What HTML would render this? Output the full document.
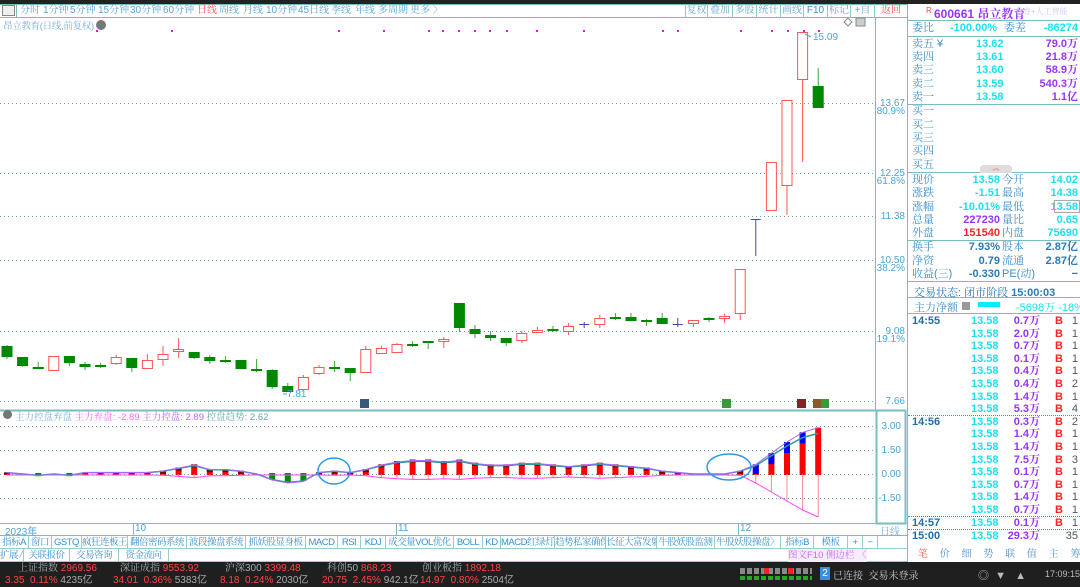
<!DOCTYPE html>
<html><head><meta charset="utf-8">
<style>
*{margin:0;padding:0;box-sizing:border-box}
body{width:1080px;height:587px;overflow:hidden;background:#fff;font-family:"Liberation Sans","Noto Sans CJK SC",sans-serif;font-size:11px;color:#3a9ad6;position:relative}
.a{position:absolute;white-space:nowrap}
.cjk{font-family:"Liberation Sans","Noto Serif CJK SC",serif}
.row{position:absolute;left:912px;width:166px;height:13px;line-height:13px;font-size:11px}
.row span{position:absolute;white-space:nowrap}
.tb{position:absolute;top:4px;height:14px;line-height:14px;border-left:1px solid #8cc;text-align:center;color:#6aa6cf;font-size:10px;overflow:hidden}
.tab{position:absolute;height:13px;line-height:13px;border-right:1px solid #9cc;color:#3a8fd0;font-size:9.5px;text-align:center;overflow:hidden;white-space:nowrap;letter-spacing:-0.5px}
.tt{position:absolute;top:4px;line-height:14px;font-size:10px;color:#5aa3d8}
</style></head><body>
<div class="a" style="left:0;top:0;width:1080px;height:4px;background:#222"></div>
<div class="a" style="left:0;top:4px;width:908px;height:14px;border-bottom:1px solid #7bbcbc;border-top:1px solid #7bbcbc"></div>
<div class="a" style="left:2px;top:5px;width:13px;height:11px;border:1px solid #888;background:#eee"></div>
<div class="a" style="left:16px;top:4px;height:14px;border-left:1px solid #7bbcbc"></div>
<div class="tt cjk" style="left:20px">分时</div>
<div class="tt cjk" style="left:43px">1分钟</div>
<div class="tt cjk" style="left:70px">5分钟</div>
<div class="tt cjk" style="left:98px">15分钟</div>
<div class="tt cjk" style="left:130px">30分钟</div>
<div class="tt cjk" style="left:163px">60分钟</div>
<div class="tt cjk" style="left:197px;color:#f55">日线</div>
<div class="tt cjk" style="left:219px">周线</div>
<div class="tt cjk" style="left:243px">月线</div>
<div class="tt cjk" style="left:266px">10分钟</div>
<div class="tt cjk" style="left:298px">45日线</div>
<div class="tt cjk" style="left:331px">季线</div>
<div class="tt cjk" style="left:355px">年线</div>
<div class="tt cjk" style="left:378px">多周期</div>
<div class="tt cjk" style="left:410px">更多 〉</div>
<div class="tb cjk" style="left:685px;width:22px">复权</div>
<div class="tb cjk" style="left:707px;width:25px">叠加</div>
<div class="tb cjk" style="left:732px;width:24px">多股</div>
<div class="tb cjk" style="left:756px;width:24px">统计</div>
<div class="tb cjk" style="left:780px;width:23px">画线</div>
<div class="tb" style="left:803px;width:24px;color:#3a8fd0">F10</div>
<div class="tb cjk" style="left:827px;width:23px">标记</div>
<div class="tb cjk" style="left:850px;width:24px">+自选</div>
<div class="tb cjk" style="left:874px;width:34px;color:#f55;border-right:1px solid #8cc">返回</div>

<div class="a cjk" style="left:3px;top:18px;font-size:9.5px;color:#7ab0d8;letter-spacing:-0.3px">昂立教育(日线,前复权)</div>
<div class="a" style="left:96px;top:20px;width:10px;height:10px;border-radius:5px;background:#777"></div>

<svg class="a" style="left:0;top:0" width="908" height="562" xmlns="http://www.w3.org/2000/svg" id="ch">
<g stroke="#6aa" stroke-dasharray="1,3" stroke-width="1">
<line x1="0" y1="103.5" x2="876" y2="103.5"/><line x1="0" y1="173.5" x2="876" y2="173.5"/><line x1="0" y1="216.5" x2="876" y2="216.5"/><line x1="0" y1="260.5" x2="876" y2="260.5"/><line x1="0" y1="331.5" x2="876" y2="331.5"/><line x1="0" y1="401.5" x2="876" y2="401.5"/>
<line x1="0" y1="426.5" x2="876" y2="426.5"/><line x1="0" y1="450.5" x2="876" y2="450.5"/><line x1="0" y1="474.5" x2="876" y2="474.5"/><line x1="0" y1="498.5" x2="876" y2="498.5"/>
</g>
<line x1="875.5" y1="18" x2="875.5" y2="410" stroke="#7bbcbc"/>
<line x1="0" y1="410.5" x2="876" y2="410.5" stroke="#7bbcbc" stroke-width="2"/>
<rect x="876.5" y="410.5" width="29" height="113" fill="none" stroke="#7bbcbc" stroke-width="2"/>
<line x1="0" y1="523.5" x2="908" y2="523.5" stroke="#7bbcbc"/>
<line x1="0" y1="535.5" x2="908" y2="535.5" stroke="#7bbcbc"/>
<line x1="0" y1="548.5" x2="908" y2="548.5" stroke="#9cc"/>
<line x1="0" y1="561.5" x2="908" y2="561.5" stroke="#9cc"/>
<g stroke="#7bbcbc"><line x1="133.5" y1="523" x2="133.5" y2="535"/><line x1="396.5" y1="523" x2="396.5" y2="535"/><line x1="738.5" y1="523" x2="738.5" y2="535"/></g>
<g><path d="M848 18 l4 4 -4 4 -4 -4z" fill="none" stroke="#888"/><rect x="856" y="18" width="9" height="8" fill="#ccc" stroke="#888"/></g>
<g id="dots" fill="#f0f"></g>
<g id="cd"></g>
<g id="sub"></g>
<g font-size="10" fill="#4aa3d8" font-family="Liberation Sans" text-anchor="end">
<text x="905" y="106">13.67</text><text x="905" y="114">80.9%</text>
<text x="905" y="176">12.25</text><text x="905" y="184">61.8%</text>
<text x="905" y="219">11.38</text>
<text x="905" y="263">10.50</text><text x="905" y="271">38.2%</text>
<text x="905" y="334">9.08</text><text x="905" y="342">19.1%</text>
<text x="905" y="404">7.66</text>
<text x="901" y="429">3.00</text><text x="901" y="453">1.50</text><text x="901" y="477">0.00</text><text x="901" y="501">-1.50</text>
<text x="813" y="40" text-anchor="start">15.09</text>
<text x="287" y="397" text-anchor="start">7.81</text>
</g>
<path d="M805 34 l6 3 M283 394 h4" stroke="#4aa3d8"/>
<rect x="360" y="399" width="9" height="9" fill="#36587a"/><rect x="722" y="399" width="9" height="9" fill="#3a9a3a"/><rect x="797" y="399" width="9" height="9" fill="#8a2020"/><rect x="813" y="399" width="8" height="9" fill="#8a5a2a"/><rect x="821" y="399" width="8" height="9" fill="#3a9a3a"/>
<ellipse cx="334" cy="471" rx="16" ry="13" fill="none" stroke="#2a9ae8" stroke-width="1.5"/>
<ellipse cx="729" cy="467" rx="22" ry="13" fill="none" stroke="#2a9ae8" stroke-width="1.5"/>
</svg>

<div class="a" style="left:3px;top:410px;width:9px;height:9px;border-radius:5px;background:#777"></div>
<div class="a cjk" style="left:15px;top:409px;font-size:9.5px;color:#7ab0d8">主力控盘弃盘 <span style="color:#f6f">主力弃盘: -2.89</span> <span style="color:#b6f">主力控盘: 2.89</span> <span style="color:#6aa">控盘趋势: 2.62</span></div>
<div class="a" style="left:5px;top:523px;font-size:10px;color:#4aa3d8">2023年</div>
<div class="a" style="left:135px;top:523px;font-size:10px;color:#4aa3d8">10</div>
<div class="a" style="left:398px;top:523px;font-size:10px;color:#4aa3d8">11</div>
<div class="a" style="left:740px;top:523px;font-size:10px;color:#4aa3d8">12</div>
<div class="a cjk" style="left:880px;top:523px;font-size:10px;color:#7ab0d8">日线</div>

<div class="a cjk" id="tabs1" style="left:0;top:536px;height:13px;width:908px"></div>
<div class="a cjk" id="tabs2" style="left:0;top:549px;height:13px;width:908px"></div>
<div class="a cjk" style="left:788px;top:549px;font-size:9.5px;color:#c6f;line-height:13px;background:#f4eefc">图文F10 侧边栏 〈</div>
<div class="a cjk" style="left:908px;top:548px;width:172px;height:14px;font-size:10px;line-height:14px;color:#4a8fd0;word-spacing:9px;padding-left:10px"><span style="color:#f55">笔</span> 价 细 势 联 值 主 筹</div>

<div class="a" style="left:907px;top:4px;width:1px;height:558px;background:#7bbcbc"></div>
<div class="a" style="left:926px;top:6px;font-size:8px;color:#f44">R</div>
<div class="a" style="left:934px;top:5px;font-size:12px;font-weight:bold;color:#93f">600661 <span class="cjk">昂立教育</span></div>
<div class="a cjk" style="left:1015px;top:6px;font-size:8px;color:#c9c9f2">教育+人工智能</div>
<div class="a" style="left:908px;top:20px;width:172px;height:1px;background:#7bbcbc"></div>
<div id="rp"></div>

<div class="a" style="left:0;top:562px;width:1080px;height:25px;background:#1f1f1f"></div>
<div class="a cjk" style="left:18px;top:563px;font-size:10px;line-height:11px;color:#aaa">上证指数 <span style="color:#f44">2969.56</span></div>
<div class="a cjk" style="left:120px;top:563px;font-size:10px;line-height:11px;color:#aaa">深证成指 <span style="color:#f44">9553.92</span></div>
<div class="a cjk" style="left:225px;top:563px;font-size:10px;line-height:11px;color:#aaa">沪深300 <span style="color:#f44">3399.48</span></div>
<div class="a cjk" style="left:327px;top:563px;font-size:10px;line-height:11px;color:#aaa">科创50 <span style="color:#f44">868.23</span></div>
<div class="a cjk" style="left:422px;top:563px;font-size:10px;line-height:11px;color:#aaa">创业板指 <span style="color:#f44">1892.18</span></div>
<div class="a" style="left:5px;top:575px;font-size:10px;line-height:11px;color:#f44">3.35 &nbsp;0.11% <span style="color:#aaa">4235亿</span></div>
<div class="a" style="left:113px;top:575px;font-size:10px;line-height:11px;color:#f44">34.01 &nbsp;0.36% <span style="color:#aaa">5383亿</span></div>
<div class="a" style="left:220px;top:575px;font-size:10px;line-height:11px;color:#f44">8.18 &nbsp;0.24% <span style="color:#aaa">2030亿</span></div>
<div class="a" style="left:322px;top:575px;font-size:10px;line-height:11px;color:#f44">20.75 &nbsp;2.45% <span style="color:#aaa">942.1亿</span></div>
<div class="a" style="left:420px;top:575px;font-size:10px;line-height:11px;color:#f44">14.97 &nbsp;0.80% <span style="color:#aaa">2504亿</span></div>
<div class="a" style="left:740px;top:568px;width:72px;height:6px;background:repeating-linear-gradient(90deg,#888 0 5px,#1f1f1f 5px 7px)"></div>
<div class="a" style="left:740px;top:576px;width:72px;height:4px;background:repeating-linear-gradient(90deg,#2a2 0 5px,#1f1f1f 5px 7px)"></div>
<div class="a" style="left:764px;top:568px;width:5px;height:6px;background:#e22"></div><div class="a" style="left:788px;top:568px;width:5px;height:6px;background:#e22"></div>
<div class="a" style="left:820px;top:567px;width:10px;height:13px;background:#3a8fe0;color:#fff;font-size:10px;text-align:center;line-height:13px">2</div>
<div class="a cjk" style="left:833px;top:567px;font-size:10px;color:#ccc">已连接 &nbsp;交易未登录</div>
<div class="a" style="left:978px;top:567px;font-size:11px;color:#bbb">◎ &nbsp;▼ &nbsp; ▲</div>
<div class="a" style="left:1045px;top:569px;font-size:9px;color:#bbb">17:09:15</div>

<script>
var NS="http://www.w3.org/2000/svg";
function el(p,t,a){var e=document.createElementNS(NS,t);for(var k in a)e.setAttribute(k,a[k]);p.appendChild(e);return e;}
var cd=document.getElementById('cd');
var C=[[346,357,345,359,'g'],[357,366,357,367,'g'],[367,367,362,369,'g'],[356,371,356,371,'r'],[356,363,356,366,'g'],[364,367,362,370,'g'],[365,365,363,368,'g'],[357,364,355,365,'r'],[358,368,358,372,'g'],[360,369,354,369,'r'],[354,360,346,366,'r'],[349,352,338,358,'r'],[352,358,352,359,'g'],[357,361,355,364,'g'],[360,360,356,363,'g'],[360,369,360,369,'g'],[369,371,359,372,'g'],[370,387,369,389,'g'],[386,392,383,392,'g'],[377,390,375,390,'r'],[367,374,365,375,'r'],[367,367,361,372,'g'],[368,373,368,381,'g'],[349,373,346,373,'r'],[348,354,346,354,'r'],[344,353,343,353,'r'],[344,344,341,347,'g'],[341,341,341,349,'g'],[339,342,337,348,'r'],
[303,328,303,332,'g'],[329,334,325,338,'g'],[335,338,331,341,'g'],[338,343,338,346,'g'],[333,341,331,343,'r'],[330,333,327,333,'r'],[329,331,326,332,'g'],[326,332,323,335,'r'],[324,324,322,328,'b'],[318,325,315,328,'r'],[317,319,313,320,'g'],[317,321,313,321,'g'],[320,320,319,326,'g'],[318,324,313,324,'g'],[324,324,318,327,'b'],[320,324,320,327,'r'],[318,320,317,322,'g'],[316,319,314,323,'r'],[269,314,269,320,'r'],[219,219,219,256,'b'],[162,211,162,211,'r'],[100,186,100,215,'r'],[32,80,32,162,'r'],[86,108,68,108,'g']];
C.forEach(function(c,i){var x=7+i*15.6;var col=c[4]=='g'?'#080':c[4]=='r'?'#f55':'#44a';
 el(cd,'line',{x1:x,y1:c[2],x2:x,y2:c[3],stroke:c[4]=='g'?'#3a3':col});
 var h=Math.max(c[1]-c[0],1);
 if(c[4]=='g')el(cd,'rect',{x:x-5.5,y:c[0],width:11,height:Math.max(h,2),fill:'#080'});
 else if(c[4]=='r')el(cd,'rect',{x:x-5,y:c[0]+.5,width:10,height:Math.max(h-1,2),fill:'#fff',stroke:'#f55'});
 else el(cd,'line',{x1:x-5,y1:c[0]+.5,x2:x+5,y2:c[0]+.5,stroke:col});
});
var dots=document.getElementById('dots');
[97,172,339,384,429,443,459,475,490,507,537,584,663,678,741,772,788,804,819].forEach(function(x){el(dots,'rect',{x:x-1,y:30,width:2,height:2});});
var sb=document.getElementById('sub');
var Z=474;
var up=[0.1,0,-0.1,0,-0.1,0.1,0.1,0.1,0.1,0.1,0.2,0.4,0.6,0.3,0.3,0.2,0,-0.4,-0.6,-0.5,0.1,0.2,0.1,0.3,0.6,0.8,0.9,0.9,0.8,0.9,0.7,0.6,0.6,0.7,0.7,0.6,0.5,0.6,0.7,0.6,0.5,0.4,0.2,0.1,0.0,0,0,0.2,0.6,1.3,2.0,2.6,2.9];
var tl="",ml="",bl="";
up.forEach(function(v,i){var x=7+i*15.6;var y=Z-v*16;
 tl+=(i?'L':'M')+x+' '+(Z-v*14);
 var lo=v>0.15?Z+v*6:Z+1;if(i>47)lo=Z+(i-47)*9+(i==52?-2:0);
 ml+=(i?'L':'M')+x+' '+lo;
 bl+=(i?'L':'M')+x+' '+(i>47?y:Z-v*15);
 if(v<0){el(sb,'rect',{x:x-3,y:Z-1,width:6,height:-v*12+2,fill:'#080'});}
 else{var top=y;el(sb,'rect',{x:x-3,y:top,width:6,height:Z-top+1,fill:'#f00'});
  if(i<52)el(sb,'rect',{x:x-3,y:top,width:6,height:Math.min(Z-top,i>47?11:3),fill:i>47?'#00f':'#700'});
  if(v>0.15||i>47)el(sb,'line',{x1:x,y1:Z,x2:x,y2:lo,stroke:'#f88'});}
});
el(sb,'path',{d:ml,fill:'none',stroke:'#f4f'});
el(sb,'path',{d:tl,fill:'none',stroke:'#2a9a9a','stroke-width':1.5});
el(sb,'path',{d:bl,fill:'none',stroke:'#a6f'});
function tabs(id,arr){var d=document.getElementById(id);var x=0;arr.forEach(function(t){var s=document.createElement('div');s.className='tab';s.style.left=x+'px';s.style.width=t[1]+'px';s.textContent=t[0];d.appendChild(s);x+=t[1];});}
tabs('tabs1',[['指标A',29],['窗口',23],['GSTQ',30],['疯狂连板王',46],['翻倍密码系统',59],['波段操盘系统',59],['抓妖股显身板',60],['MACD',32],['RSI',23],['KDJ',25],['成交量VOL优化',68],['BOLL',29],['KD',18],['MACD红绿灯',54],['趋势私家确保',51],['长征大富发射',51],['牛股妖股监测',58],['牛股妖股操盘〉',66],['指标B',33],['模板',34],['+',15],['−',15]]);
tabs('tabs2',[['扩展∧',24],['关联报价',46],['交易咨询',49],['资金流向',50]]);
var rp=document.getElementById('rp');
function add(y,h){var r=document.createElement('div');r.className='row';r.style.top=(y-6)+'px';r.innerHTML=h;rp.appendChild(r);}
add(28,'<span class="cjk" style="left:0;color:#3a8fd0">委比</span><span style="left:38px;color:#1ce0f0;font-weight:bold">-100.00%</span><span class="cjk" style="left:92px;color:#3a8fd0">委差</span><span style="right:0;color:#1ce0f0;font-weight:bold">-86274</span>');
function ob(y,a,p,v){add(y,'<span class="cjk" style="left:0;color:#3a8fd0">'+a+'</span><span style="left:64px;color:#1ce0f0;font-weight:bold">'+p+'</span><span class="cjk" style="right:0;color:#93f;font-weight:bold">'+v+'</span>');}
ob(44,'卖五 ¥','13.62','79.0万');ob(57,'卖四','13.61','21.8万');ob(70,'卖三','13.60','58.9万');ob(84,'卖二','13.59','540.3万');ob(97,'卖一','13.58','1.1亿');
ob(111,'买一','','');ob(125,'买二','','');ob(138,'买三','','');ob(151,'买四','','');ob(165,'买五','','');
function q(y,a,b,c,d,cb,cd2){add(y,'<span class="cjk" style="left:0;color:#3a8fd0">'+a+'</span><span style="right:78px;color:'+cb+';font-weight:bold">'+b+'</span><span class="cjk" style="left:90px;color:#3a8fd0">'+c+'</span><span class="cjk" style="right:0;color:'+cd2+';font-weight:bold">'+d+'</span>');}
q(180,'现价','13.58','今开','14.02','#1ce0f0','#1ce0f0');q(193,'涨跌','-1.51','最高','14.38','#1ce0f0','#1ce0f0');q(207,'涨幅','-10.01%','最低','13.58','#1ce0f0','#1ce0f0');q(220,'总量','227230','量比','0.65','#93f','#1ce0f0');q(233,'外盘','151540','内盘','75690','#f22','#1ce0f0');
q(247,'换手','7.93%','股本','2.87亿','#2a7ab8','#2a7ab8');q(261,'净资','0.79','流通','2.87亿','#2a7ab8','#2a7ab8');q(274,'收益(三)','-0.330','PE(动)','−','#2a7ab8','#2a7ab8');
var ticks=[['14:55','0.7万','1'],['','2.0万','1'],['','0.7万','1'],['','0.1万','1'],['','0.4万','1'],['','0.4万','2'],['','1.4万','1'],['','5.3万','4'],['14:56','0.3万','2'],['','1.4万','1'],['','1.4万','1'],['','7.5万','3'],['','0.1万','1'],['','0.7万','1'],['','1.4万','1'],['','0.7万','1'],['14:57','0.1万','1']];
ticks.forEach(function(t,i){var y=321+i*12.6;add(y,'<span style="left:0;color:#1a6fb0;font-weight:bold">'+t[0]+'</span><span style="left:59px;color:#1ce0f0;font-weight:bold">13.58</span><span class="cjk" style="right:38px;color:#93f;font-weight:bold">'+t[1]+'</span><span style="left:143px;color:#f22;font-weight:bold">B</span><span style="right:0;color:#555">'+t[2]+'</span>');});
add(536,'<span style="left:0;color:#1a6fb0;font-weight:bold">15:00</span><span style="left:59px;color:#1ce0f0;font-weight:bold">13.58</span><span class="cjk" style="right:38px;color:#93f;font-weight:bold">29.3万</span><span style="right:0;color:#555">35</span>');
</script>
<div class="a" style="left:908px;top:36px;width:172px;height:1px;background:#7bbcbc"></div>
<div class="a" style="left:908px;top:104px;width:172px;height:1px;background:#7bbcbc"></div>
<div class="a" style="left:908px;top:172px;width:172px;height:1px;background:#7bbcbc"></div>
<div class="a" style="left:980px;top:165px;width:32px;height:8px;border-radius:4px 4px 0 0;background:#ddd;color:#f66;font-size:7px;text-align:center;line-height:8px">︽</div>
<div class="a" style="left:908px;top:240px;width:172px;height:1px;background:#7bbcbc"></div>
<div class="a" style="left:908px;top:281px;width:172px;height:1px;background:#7bbcbc"></div>
<div class="a" style="left:908px;top:297px;width:172px;height:1px;background:#7bbcbc"></div>
<div class="a" style="left:908px;top:313px;width:172px;height:1px;background:#7bbcbc"></div>
<div class="a" style="left:1054px;top:200px;width:26px;height:13px;border:1px solid #aaa"></div>
<div class="a cjk" style="left:914px;top:284px;font-size:11px;color:#2a7ab8">交易状态: 闭市阶段 <b>15:00:03</b></div>
<div class="a cjk" style="left:914px;top:299px;font-size:11px;color:#3a8fd0">主力净额</div>
<div class="a" style="left:962px;top:302px;width:8px;height:8px;background:#999"></div>
<div class="a" style="left:978px;top:302px;width:22px;height:5px;background:#0ef"></div>
<div class="a cjk" style="left:1016px;top:299px;font-size:11px;color:#1ce0f0">-5698万 -18%</div>
<div class="a" style="left:908px;top:415px;width:172px;border-top:1px dotted #3a8fd0"></div>
<div class="a" style="left:908px;top:516px;width:172px;border-top:1px dotted #3a8fd0"></div>
<div class="a" style="left:908px;top:529px;width:172px;border-top:1px dotted #3a8fd0"></div>
</body></html>
